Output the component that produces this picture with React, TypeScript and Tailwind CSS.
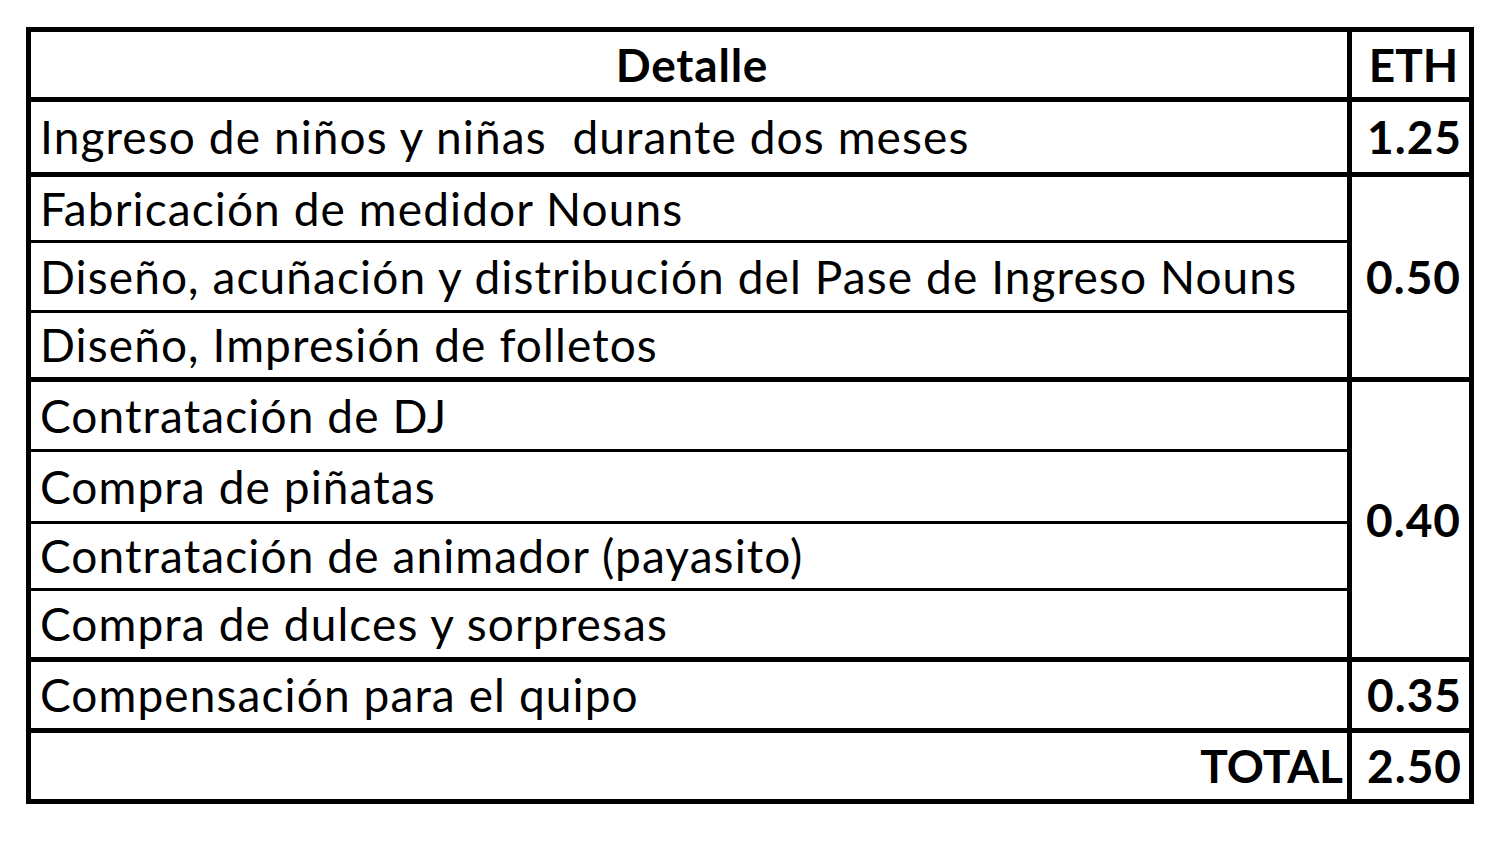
import React from "react";

const font = { fontFamily: "Lato, 'Noto Sans', sans-serif" };

function Cell({ children, h, last }: { children: React.ReactNode; h: string; last?: boolean }) {
  return (
    <div className={`${h} flex items-center pl-[9px] tracking-[1.1px] ${last ? "" : "border-b-[3px] border-black"}`}>
      <span className="whitespace-pre">{children}</span>
    </div>
  );
}

export default function App() {
  return (
    <div className="w-[1500px] h-[847px] bg-white pl-[26px] pt-[27px] text-black text-[46px] leading-none" style={font}>
      <div className="w-[1448px] border-[5px] border-black flex flex-col">
        {/* header */}
        <div className="h-[70px] flex border-b-[5px] border-black">
          <div className="w-[1321px] border-r-[5px] border-black flex items-center justify-center font-bold tracking-[0.8px] pl-[6px]">Detalle</div>
          <div className="flex-1 flex items-center justify-center font-bold pl-[6px]">ETH</div>
        </div>
        {/* row 1 */}
        <div className="h-[75px] flex border-b-[5px] border-black">
          <Cell h="w-[1321px] border-r-[5px] border-black" last>Ingreso de niños y niñas  durante dos meses</Cell>
          <div className="flex-1 flex items-center justify-end pr-[7px] font-bold tracking-[1px]">1.25</div>
        </div>
        {/* group 2 */}
        <div className="h-[205px] flex border-b-[5px] border-black">
          <div className="w-[1321px] border-r-[5px] border-black flex flex-col">
            <Cell h="h-[66px]">Fabricación de medidor Nouns</Cell>
            <Cell h="h-[70px]">Diseño, acuñación y distribución del Pase de Ingreso Nouns</Cell>
            <Cell h="flex-1" last>Diseño, Impresión de folletos</Cell>
          </div>
          <div className="flex-1 flex items-center justify-end pr-[8px] font-bold tracking-[1px]">0.50</div>
        </div>
        {/* group 3 */}
        <div className="h-[280px] flex border-b-[5px] border-black">
          <div className="w-[1321px] border-r-[5px] border-black flex flex-col">
            <Cell h="h-[70px]">Contratación de DJ</Cell>
            <Cell h="h-[72px]">Compra de piñatas</Cell>
            <Cell h="h-[67px]">Contratación de animador (payasito)</Cell>
            <Cell h="flex-1" last>Compra de dulces y sorpresas</Cell>
          </div>
          <div className="flex-1 flex items-center justify-end pr-[8px] font-bold tracking-[1px]">0.40</div>
        </div>
        {/* compensación */}
        <div className="h-[71px] flex border-b-[5px] border-black">
          <Cell h="w-[1321px] border-r-[5px] border-black" last>Compensación para el quipo</Cell>
          <div className="flex-1 flex items-center justify-end pr-[7px] font-bold tracking-[1px]">0.35</div>
        </div>
        {/* total */}
        <div className="h-[66px] flex">
          <div className="w-[1321px] border-r-[5px] border-black flex items-center justify-end pr-[4px] font-bold">TOTAL</div>
          <div className="flex-1 flex items-center justify-end pr-[7px] font-bold tracking-[1px]">2.50</div>
        </div>
      </div>
    </div>
  );
}
